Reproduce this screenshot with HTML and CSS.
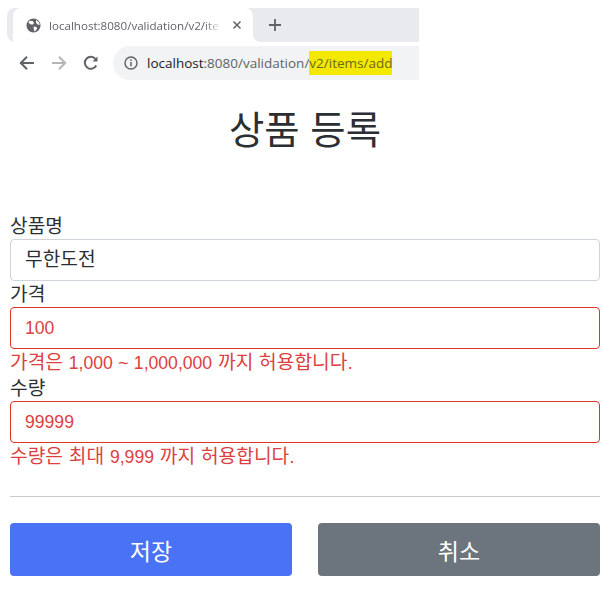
FILE: index.html
```
<!DOCTYPE html>
<html lang="ko">
<head>
<meta charset="utf-8">
<title>상품 등록</title>
<link rel="stylesheet" href="styles.css">
</head>
<body>
<div class="chrome">
  <div class="tabstrip">
    <div class="tab">
      <svg class="globe" width="15" height="15" viewBox="0 0 16 16"><circle cx="8" cy="8" r="7.500" fill="#5f6368"/><path d="M3.500 3l3.300.2 1.800 1.800-1.200 2-2.200-.2L2.600 5zM8 9l3.200.6.6 1.800L9.600 14.500l-1-1.200zM11 2l3 2.800.6 2.600-2.800-.8-1.200-2z" fill="#fff"/></svg>
      <span class="tabtitle">localhost:8080/validation/v2/ite</span>
      <svg class="tabclose" width="10" height="10" viewBox="0 0 10 10"><path d="M1.500 1.500l7 7M8.500 1.500l-7 7" stroke="#5f6368" stroke-width="1.500"/></svg>
    </div>
    <svg class="newtab" width="14" height="14" viewBox="0 0 14 14"><path d="M7 1v12M1 7h12" stroke="#5f6368" stroke-width="1.800"/></svg>
  </div>
  <div class="toolbar">
    <svg class="navicon" width="18" height="18" viewBox="0 0 18 18"><path d="M16 9H3M9 2.800L2.800 9 9 15.200" fill="none" stroke="#5f6368" stroke-width="2"/></svg>
    <svg class="navicon" width="18" height="18" viewBox="0 0 18 18"><path d="M2 9h13M9 2.800L15.200 9 9 15.200" fill="none" stroke="#b4b6b9" stroke-width="2"/></svg>
    <svg class="navicon" width="18" height="18" viewBox="0 0 18 18"><path d="M14.200 11.500A6 6 0 1 1 13.500 5" fill="none" stroke="#5f6368" stroke-width="2"/><path d="M15.500 2.500v5h-5z" fill="#5f6368"/></svg>
    <div class="omnibox">
      <svg width="14" height="14" viewBox="0 0 14 14"><circle cx="7" cy="7" r="6" fill="none" stroke="#5f6368" stroke-width="1.400"/><path d="M7 6v4.200" stroke="#5f6368" stroke-width="1.500"/><circle cx="7" cy="4.100" r=".9" fill="#5f6368"/></svg>
      <span class="url"><span class="host">localhost</span>:8080/validation/<mark class="hl">v2/items/add</mark></span>
    </div>
  </div>
</div>
<main class="container">
  <h2 class="title">상품 등록</h2>
  <form class="form">
    <label class="label">상품명</label>
    <div class="control">무한도전</div>
    <label class="label">가격</label>
    <div class="control error num">100</div>
    <div class="field-error">가격은 <span class="num">1,000 ~ 1,000,000</span> 까지 허용합니다.</div>
    <label class="label">수량</label>
    <div class="control error num">99999</div>
    <div class="field-error">수량은 최대 <span class="num">9,999</span> 까지 허용합니다.</div>
    <hr class="divider">
    <div class="actions">
      <button type="button" class="btn primary">저장</button>
      <button type="button" class="btn secondary">취소</button>
    </div>
  </form>
</main>
</body>
</html>
```
FILE: styles.css
```
* { box-sizing: border-box; }
html, body { margin: 0; padding: 0; }
body {
  width: 616px;
  height: 594px;
  overflow: hidden;
  background: #fff;
  color: #2b2f33;
  font-family: "Liberation Sans", "Noto Sans CJK KR", sans-serif;
}
.chrome {
  width: 419px;
  margin-top: 8px;
  height: 72px;
  font-family: "Open Sans", "Liberation Sans", sans-serif;
}
.tabstrip {
  height: 34px;
  margin-left: 7px;
  background: #e8eaed;
  border-radius: 8px 0 0 8px;
  display: flex;
  align-items: center;
}
.tab {
  position: relative;
  width: 240px;
  height: 34px;
  margin-left: 6px;
  background: #fff;
  border-radius: 8px 8px 0 0;
  display: flex;
  align-items: center;
  padding-left: 13px;
}
.tab::after {
  content: "";
  position: absolute;
  right: -8px;
  bottom: 0;
  width: 8px;
  height: 8px;
  background: radial-gradient(circle at 100% 0, transparent 8px, #fff 8px);
}
.globe { flex: none; }
.tabtitle {
  flex: none;
  width: 171px;
  margin-left: 8px;
  white-space: nowrap;
  font-size: 11.6px;
  color: #5f6368;
  -webkit-mask-image: linear-gradient(to right, #000 155px, transparent 173px);
  mask-image: linear-gradient(to right, #000 155px, transparent 173px);
}
.tabclose { margin-left: 12px; flex: none; }
.newtab { margin-left: 15px; }
.toolbar {
  height: 38px;
  display: flex;
  align-items: center;
  padding: 4px 0 0 18px;
  gap: 14px;
}
.navicon { flex: none; }
.omnibox {
  margin-left: -1px;
  flex: 1;
  height: 34px;
  background: #f1f3f4;
  border-radius: 17px 0 0 17px;
  display: flex;
  align-items: center;
  padding-left: 11px;
  gap: 9px;
}
.url { font-size: 13.5px; color: #5f6368; white-space: nowrap; }
.host { color: #202124; }
.hl { background: #f2e800; color: #6a6a1e; padding: 3px 0; }
.container { padding: 0 16px 0 10px; }
.title {
  margin: 22px 0 0;
  font-size: 38.4px;
  font-weight: 400;
  line-height: 58px;
  height: 58px;
  text-align: center;
}
.form { margin-top: 53px; display: flex; flex-direction: column; }
.label { font-size: 19.2px; line-height: 26px; height: 26px; padding-top: 1px; }
.control {
  height: 42px;
  border: 1px solid #ced4da;
  border-radius: 4px;
  padding: 0 14px;
  font-size: 19.2px;
  line-height: 40px;
}
.control.error { border-color: #dc3526; color: #dc3f40; }
.field-error {
  font-size: 19.2px;
  line-height: 26px;
  height: 26px;
  padding-top: 1px;
  word-spacing: 0.5px;
  color: #dc3f40;
}
.num { font-size: 17.6px; }
.divider { margin: 27px 0 26px; border: 0; border-top: 1px solid #ccc; width: 100%; }
.actions { display: grid; grid-template-columns: 1fr 1fr; gap: 26px; }
.btn {
  height: 53px;
  border: 0;
  border-radius: 4px;
  color: #fff;
  font-family: inherit;
  font-size: 23px;
}
.primary { background: #4a72f5; }
.secondary { background: #6c757d; }
```
